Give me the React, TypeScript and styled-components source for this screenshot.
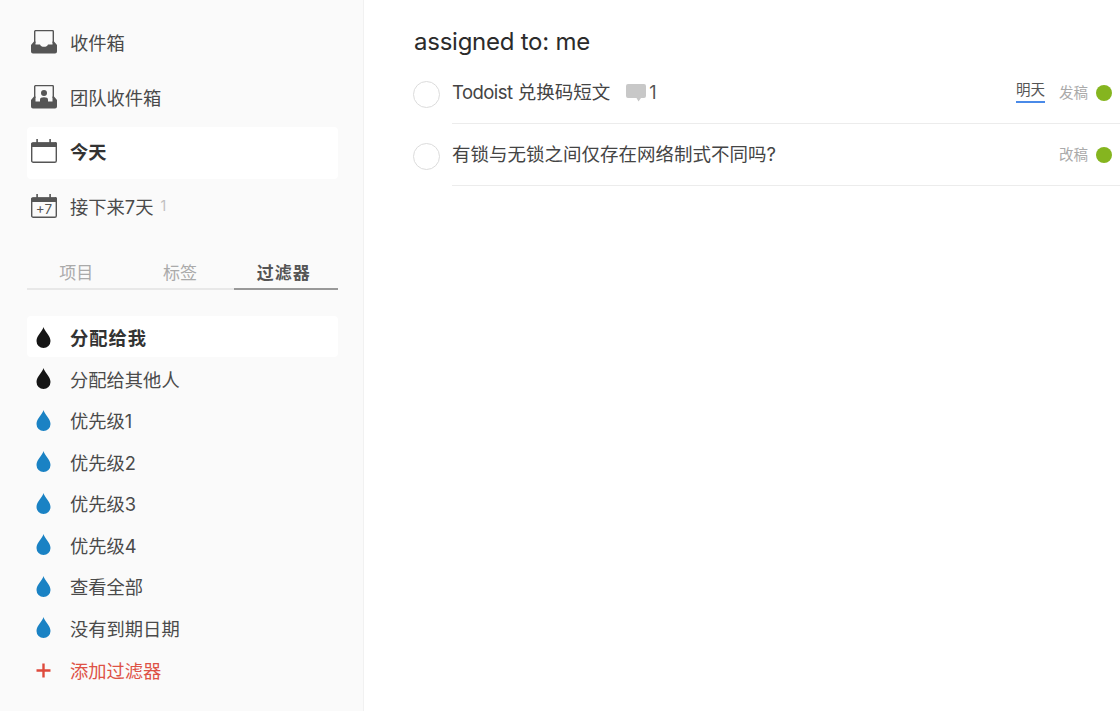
import { createGlobalStyle } from "styled-components";
import styled from "styled-components";

const GlobalStyle = createGlobalStyle`
  html, body {
    margin: 0;
    padding: 0;
    height: 100%;
    overflow: hidden;
    background: #fff;
  }
  body {
    font-family: Inter, "Noto Sans CJK SC", sans-serif;
    color: #333;
  }
`;

const Page = styled.div`
  display: flex;
  width: 1120px;
  height: 711px;
`;

const Sidebar = styled.aside`
  box-sizing: border-box;
  width: 364px;
  height: 711px;
  flex-shrink: 0;
  padding: 18px 26px 0 27px;
  background: #fafafa;
  border-right: 1px solid #f1f1f1;
`;

const NavList = styled.nav`
  display: flex;
  flex-direction: column;
  gap: 3px;
`;

const NavItem = styled.div<{ $active?: boolean }>`
  box-sizing: border-box;
  display: flex;
  align-items: center;
  width: 311px;
  height: 51.5px;
  padding-bottom: 3px;
  border-radius: 4px;
  font-size: 18.3px;
  font-weight: ${(p) => (p.$active ? 700 : 400)};
  background: ${(p) => (p.$active ? "#fff" : "transparent")};
  color: ${(p) => (p.$active ? "#333" : "#4a4a4a")};
`;

const NavIcon = styled.span`
  display: flex;
  justify-content: center;
  width: 33px;
  margin-right: 10px;
`;

const Count = styled.span`
  margin-left: 7px;
  font-size: 14px;
  color: #c0c0c0;
`;

const Tabs = styled.div`
  display: flex;
  width: 311px;
  margin-top: 26px;
`;

const Tab = styled.div<{ $active?: boolean }>`
  flex: 1;
  box-sizing: border-box;
  height: 31px;
  padding-right: 5px;
  text-align: center;
  line-height: 28px;
  font-size: 17px;
  font-weight: ${(p) => (p.$active ? 700 : 400)};
  letter-spacing: ${(p) => (p.$active ? "1px" : "0")};
  color: ${(p) => (p.$active ? "#555" : "#aaa")};
  border-bottom: 2px solid ${(p) => (p.$active ? "#999" : "#e8e8e8")};
`;

const FilterList = styled.div`
  display: flex;
  flex-direction: column;
  margin-top: 25.5px;
`;

const FilterItem = styled.div<{ $active?: boolean; $add?: boolean }>`
  box-sizing: border-box;
  display: flex;
  align-items: center;
  width: 311px;
  height: 41.5px;
  padding-top: 2px;
  margin-top: ${(p) => (p.$add ? "1px" : "0")};
  border-radius: 4px;
  font-size: 18.3px;
  font-weight: ${(p) => (p.$active ? 700 : 400)};
  letter-spacing: ${(p) => (p.$active ? "1px" : "0")};
  background: ${(p) => (p.$active ? "#fff" : "transparent")};
  color: ${(p) => (p.$add ? "#de5246" : p.$active ? "#333" : "#4a4a4a")};
`;

const Main = styled.main`
  flex: 1;
  min-width: 0;
  padding: 21px 0 0 49px;
`;

const Title = styled.h1`
  margin: 0;
  padding-left: 1px;
  font-size: 24px;
  letter-spacing: -0.25px;
  line-height: 41px;
  font-weight: 400;
  color: #2b2b2b;
`;

const Task = styled.div`
  display: flex;
  align-items: flex-start;
`;

const Circle = styled.span`
  box-sizing: border-box;
  width: 27px;
  height: 27px;
  margin: 19px 12px 0 0;
  flex-shrink: 0;
  border: 1.5px solid #dcdcdc;
  border-radius: 50%;
`;

const TaskBody = styled.div`
  flex: 1;
  min-width: 0;
  display: flex;
  align-items: center;
  height: 61px;
  padding-right: 8px;
  border-bottom: 1px solid #ececec;
  font-size: 18.5px;
  color: #444;
`;

const TaskText = styled.span`
  line-height: 26px;
  margin-top: -2px;
`;

const Latin = styled.span`
  letter-spacing: -0.55px;
`;

const Comment = styled.span`
  display: inline-flex;
  align-items: center;
  gap: 3px;
  margin-left: 16px;
  font-size: 18px;
  color: #555;
`;

const Meta = styled.div`
  margin-left: auto;
  display: flex;
  align-items: center;
  font-size: 14.5px;
`;

const Due = styled.span`
  margin-right: 14px;
  margin-top: -2px;
  padding-bottom: 1px;
  line-height: 20px;
  color: #555;
  border-bottom: 2px solid #4a8ae8;
`;

const Project = styled.span`
  margin-top: -2px;
  color: #aaa;
`;

const Dot = styled.span`
  width: 16px;
  height: 16px;
  margin-left: 8px;
  border-radius: 50%;
  background: #85b51f;
`;

const InboxIcon = () => (
  <svg width="26" height="24" viewBox="0 0 26 24">
    <path d="M3.700 13V1.600a1 1 0 0 1 1-1h16.600a1 1 0 0 1 1 1V13" fill="none" stroke="#555" strokeWidth="1.4" />
    <path d="M3 11.500h1.500v3H9c.5 1.500 2 2.300 4 2.300s3.500-.8 4-2.300h4.500v-3H23l3 3.500v6.500a2 2 0 0 1-2 2H2a2 2 0 0 1-2-2V15z" fill="#555" />
  </svg>
);

const TeamInboxIcon = () => (
  <svg width="26" height="24" viewBox="0 0 26 24">
    <path d="M3.700 13V1.600a1 1 0 0 1 1-1h16.600a1 1 0 0 1 1 1V13" fill="none" stroke="#555" strokeWidth="1.4" />
    <circle cx="13" cy="8" r="3" fill="#555" />
    <path d="M9 17v-2.500c0-1.500 1.500-2.200 4-2.200s4 .7 4 2.200V17z" fill="#555" />
    <path d="M3 11.500h1.500v5h17v-5H23l3 3.500v6.500a2 2 0 0 1-2 2H2a2 2 0 0 1-2-2V15z" fill="#555" />
  </svg>
);

const CalendarIcon = ({ label }: { label?: string }) => (
  <svg width="26" height="24" viewBox="0 0 26 24">
    <rect x="0.7" y="4" width="24.600" height="19.300" rx="1.600" fill="none" stroke="#555" strokeWidth="1.4" />
    <path d="M0 8V5a1.600 1.600 0 0 1 1.600-1.600H5.300V0h1.600v3.400h11.400V0h1.600v3.400h3.500A1.600 1.600 0 0 1 26 5v3z" fill="#555" />
    {label && (
      <text x="13" y="20" textAnchor="middle" fontSize="13.5" fontFamily="Inter, sans-serif" fill="#555">
        {label}
      </text>
    )}
  </svg>
);

const Drop = ({ color }: { color: string }) => (
  <svg width="15" height="21" viewBox="0 0 15 21">
    <path d="M7.500 0C8.200 4 14.500 8.500 14.500 14a7 7 0 0 1-14 0C.5 8.500 6.800 4 7.500 0z" fill={color} />
  </svg>
);

const Plus = () => (
  <svg width="15" height="15" viewBox="0 0 15 15">
    <path d="M7.500 0.500v14M0.500 7.500h14" stroke="#de4a3c" strokeWidth="2.4" />
  </svg>
);

const CommentIcon = () => (
  <svg width="20" height="18" viewBox="0 0 20 18">
    <path d="M2 0h16a2 2 0 0 1 2 2v10a2 2 0 0 1-2 2h-3l-2.500 3.500-2-3.500H2a2 2 0 0 1-2-2V2a2 2 0 0 1 2-2z" fill="#c8c8c8" />
  </svg>
);

const filters = [
  { name: "分配给我", color: "#151515", active: true },
  { name: "分配给其他人", color: "#151515" },
  { name: "优先级1", color: "#1a82c4" },
  { name: "优先级2", color: "#1a82c4" },
  { name: "优先级3", color: "#1a82c4" },
  { name: "优先级4", color: "#1a82c4" },
  { name: "查看全部", color: "#1a82c4" },
  { name: "没有到期日期", color: "#1a82c4" },
];

export default function App() {
  return (
    <Page>
      <GlobalStyle />
      <Sidebar>
        <NavList>
          <NavItem>
            <NavIcon><InboxIcon /></NavIcon>收件箱
          </NavItem>
          <NavItem>
            <NavIcon><TeamInboxIcon /></NavIcon>团队收件箱
          </NavItem>
          <NavItem $active>
            <NavIcon><CalendarIcon /></NavIcon>今天
          </NavItem>
          <NavItem>
            <NavIcon><CalendarIcon label="+7" /></NavIcon>接下来7天<Count>1</Count>
          </NavItem>
        </NavList>
        <Tabs>
          <Tab>项目</Tab>
          <Tab>标签</Tab>
          <Tab $active>过滤器</Tab>
        </Tabs>
        <FilterList>
          {filters.map((f) => (
            <FilterItem key={f.name} $active={f.active}>
              <NavIcon><Drop color={f.color} /></NavIcon>
              {f.name}
            </FilterItem>
          ))}
          <FilterItem $add>
            <NavIcon><Plus /></NavIcon>添加过滤器
          </FilterItem>
        </FilterList>
      </Sidebar>
      <Main>
        <Title>assigned to: me</Title>
        <Task>
          <Circle />
          <TaskBody>
            <TaskText><Latin>Todoist</Latin> 兑换码短文</TaskText>
            <Comment><CommentIcon />1</Comment>
            <Meta>
              <Due>明天</Due>
              <Project>发稿</Project>
              <Dot />
            </Meta>
          </TaskBody>
        </Task>
        <Task>
          <Circle />
          <TaskBody>
            <TaskText>有锁与无锁之间仅存在网络制式不同吗?</TaskText>
            <Meta>
              <Project>改稿</Project>
              <Dot />
            </Meta>
          </TaskBody>
        </Task>
      </Main>
    </Page>
  );
}
